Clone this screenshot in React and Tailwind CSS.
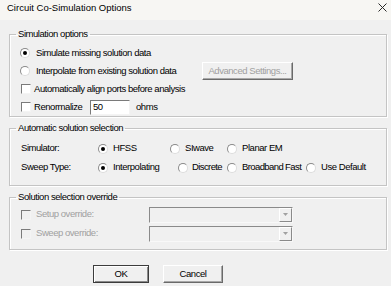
import React from "react";

const Radio = ({ checked }) => (
  <span className="w-[10px] h-[10px] shrink-0 rounded-full bg-white border border-t-[#8a8a8a] border-l-[#8a8a8a] border-r-[#dcdcdc] border-b-[#dcdcdc] flex items-center justify-center">
    {checked && <span className="w-[4px] h-[4px] rounded-full bg-black" />}
  </span>
);

const Check = ({ disabled }) => (
  <span
    className={`w-[10px] h-[10px] shrink-0 border border-t-[#7a7a7a] border-l-[#7a7a7a] border-r-[#f4f4f4] border-b-[#f4f4f4] ${
      disabled ? "bg-[#f0f0f0]" : "bg-white"
    }`}
  />
);

const Group = ({ title, className, children }) => (
  <fieldset
    className={`ml-[9px] w-[378px] border border-[#c4c4c4] shadow-[1px_1px_0_#fff,inset_1px_1px_0_#fff] px-[11px] ${className}`}
  >
    <legend className="ml-[-5px] px-[2px] leading-[12px]">{title}</legend>
    {children}
  </fieldset>
);

const Combo = () => (
  <div className="ml-auto mr-[82px] w-[144px] h-[16px] flex bg-[#f0f0f0] border border-t-[#8a8a8a] border-l-[#8a8a8a] border-r-[#f8f8f8] border-b-[#f8f8f8]">
    <div className="flex-1" />
    <div className="w-[13px] h-full flex items-center justify-center border border-t-white border-l-white border-r-[#8a8a8a] border-b-[#8a8a8a]">
      <svg width="5" height="3" viewBox="0 0 5 3">
        <path d="M0 0h5L2.5 3z" fill="#a0a0a0" />
      </svg>
    </div>
  </div>
);

const Button = ({ children, disabled, isDefault, className }) => (
  <div
    className={`h-[18px] flex items-center justify-center border ${
      isDefault
        ? "border-[#3c3c3c] shadow-[inset_1px_1px_0_#fff,inset_-1px_-1px_0_#8a8a8a]"
        : "border-t-white border-l-white border-r-[#6a6a6a] border-b-[#6a6a6a] shadow-[inset_-1px_-1px_0_#a8a8a8]"
    } ${disabled ? "text-[#a0a0a0]" : "text-black"} ${className}`}
  >
    {children}
  </div>
);

export default function App() {
  return (
    <div className="w-[391px] h-[286px] overflow-hidden bg-[#f0f0f0] text-black text-[9.5px] tracking-[-0.45px] font-['Liberation_Sans',Arial,sans-serif]">
      <div className="h-[20px] bg-[#f7f6f3] flex items-start justify-between pl-[7px] pr-[4px] pt-[2px]">
        <span className="leading-[12px] tracking-normal">Circuit Co-Simulation Options</span>
        <svg width="9" height="9" viewBox="0 0 9 9" className="mt-[1px]">
          <path d="M0.5 0.5l8 8M8.5 0.5l-8 8" stroke="#2a2a2a" strokeWidth="1" />
        </svg>
      </div>

      <Group title="Simulation options" className="mt-[8px] pt-[4px]">
        <div className="h-[18px] flex items-center">
          <span className="ml-[-1px]"><Radio checked /></span>
          <span className="ml-[6px]">Simulate missing solution data</span>
        </div>
        <div className="h-[18px] flex items-center">
          <span className="ml-[-1px]"><Radio /></span>
          <span className="ml-[6px] w-[166px]">Interpolate from existing solution data</span>
          <Button disabled className="w-[91px]">Advanced Settings...</Button>
        </div>
        <div className="h-[18px] flex items-center">
          <Check />
          <span className="ml-[3px]">Automatically align ports before analysis</span>
        </div>
        <div className="h-[18px] flex items-center">
          <Check />
          <span className="ml-[3px] w-[56px]">Renormalize</span>
          <div className="w-[40px] h-[15px] bg-white border border-t-[#7a7a7a] border-l-[#7a7a7a] border-r-[#f4f4f4] border-b-[#f4f4f4] flex items-center pl-[2px]">
            50
          </div>
          <span className="ml-[6px]">ohms</span>
        </div>
      </Group>

      <Group title="Automatic solution selection" className="mt-[5px] pt-[5px] pb-[8px]">
        <div className="h-[19px] flex items-center">
          <span className="w-[77px]">Simulator:</span>
          <div className="w-[72px] flex items-center gap-[5px]"><Radio checked /><span>HFSS</span></div>
          <div className="w-[57px] flex items-center gap-[5px]"><Radio /><span>SIwave</span></div>
          <div className="flex items-center gap-[5px]"><Radio /><span>Planar EM</span></div>
        </div>
        <div className="h-[19px] flex items-center">
          <span className="w-[77px]">Sweep Type:</span>
          <div className="w-[80px] flex items-center gap-[5px]"><Radio checked /><span>Interpolating</span></div>
          <div className="w-[49px] flex items-center gap-[4px]"><Radio /><span className="tracking-[-0.6px]">Discrete</span></div>
          <div className="w-[79px] flex items-center gap-[5px]"><Radio /><span className="tracking-[-0.6px]">Broadband Fast</span></div>
          <div className="flex items-center gap-[5px]"><Radio /><span>Use Default</span></div>
        </div>
      </Group>

      <Group title="Solution selection override" className="mt-[5px] pt-[2px] pb-[6px]">
        <div className="h-[19px] flex items-center text-[#a0a0a0]">
          <Check disabled />
          <span className="ml-[5px]">Setup override:</span>
          <Combo />
        </div>
        <div className="h-[19px] flex items-center text-[#a0a0a0]">
          <Check disabled />
          <span className="ml-[5px]">Sweep override:</span>
          <Combo />
        </div>
      </Group>

      <div className="mt-[15px] ml-[93px] flex gap-[14px]">
        <Button isDefault className="w-[56px]">OK</Button>
        <Button className="w-[60px]">Cancel</Button>
      </div>
    </div>
  );
}
